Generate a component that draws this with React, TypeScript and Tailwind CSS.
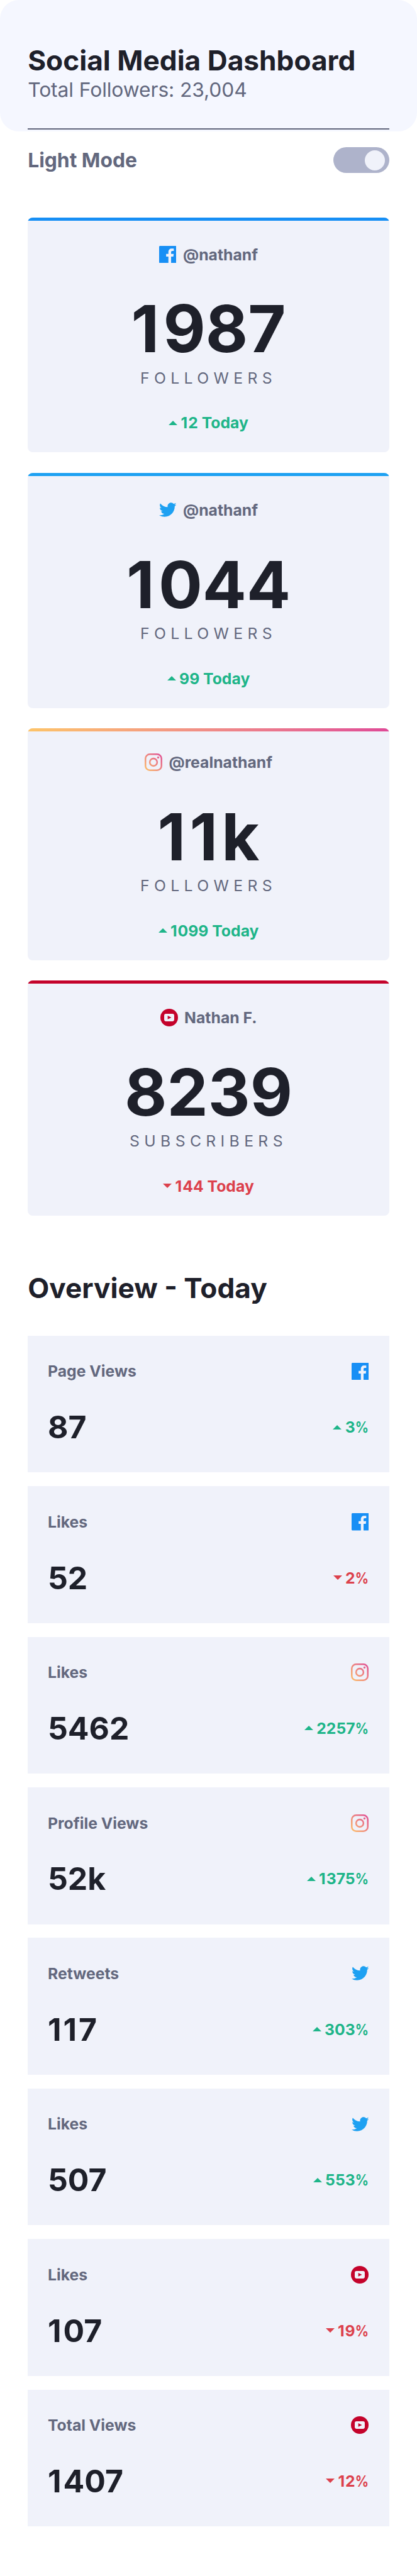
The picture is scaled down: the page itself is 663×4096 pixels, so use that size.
import { useId } from "react";

type Network = "facebook" | "twitter" | "instagram" | "youtube";
type Trend = "up" | "down";

function FacebookIcon() {
  return (
    <svg className="w-[27.6px] shrink-0" viewBox="0 0 20 20">
      <path
        fill="#178FF5"
        d="M18.896 0H1.104C.494 0 0 .494 0 1.104v17.793C0 19.506.494 20 1.104 20h9.58v-7.745H8.076V9.237h2.606V7.01c0-2.583 1.578-3.99 3.883-3.99 1.104 0 2.052.082 2.329.119v2.7h-1.598c-1.254 0-1.496.597-1.496 1.47v1.928h2.989l-.39 3.018h-2.6V20h5.098c.608 0 1.102-.494 1.102-1.104V1.104C20 .494 19.506 0 18.896 0z"
      />
    </svg>
  );
}

function TwitterIcon() {
  return (
    <svg className="w-[27.6px] shrink-0" viewBox="0 0 20 17">
      <path
        fill="#1EA1F2"
        d="M20 2.172a8.192 8.192 0 01-2.357.646 4.11 4.11 0 001.805-2.27 8.22 8.22 0 01-2.606.996A4.096 4.096 0 0013.847.248c-2.65 0-4.596 2.472-3.998 5.037A11.648 11.648 0 011.392.998a4.109 4.109 0 001.27 5.478 4.086 4.086 0 01-1.858-.513c-.045 1.9 1.318 3.679 3.291 4.075a4.113 4.113 0 01-1.853.07 4.106 4.106 0 003.833 2.849A8.25 8.25 0 010 14.658a11.616 11.616 0 006.29 1.843c7.618 0 11.923-6.434 11.663-12.205A8.354 8.354 0 0020 2.172z"
      />
    </svg>
  );
}

function InstagramIcon() {
  const id = useId();
  return (
    <svg className="w-[28px] shrink-0" viewBox="0 0 20 20" fill="none">
      <defs>
        <linearGradient id={id} gradientUnits="userSpaceOnUse" x1="0" y1="20" x2="20" y2="0">
          <stop offset="0" stopColor="#FDC468" />
          <stop offset="1" stopColor="#DF4996" />
        </linearGradient>
      </defs>
      <rect x="0.9" y="0.9" width="18.2" height="18.2" rx="5" stroke={`url(#${id})`} strokeWidth="1.8" />
      <circle cx="10" cy="10" r="4.2" stroke={`url(#${id})`} strokeWidth="1.8" />
      <circle cx="15.34" cy="4.66" r="1.2" fill={`url(#${id})`} />
    </svg>
  );
}

function YoutubeIcon() {
  return (
    <svg className="w-[28px] shrink-0" viewBox="0 0 20 20">
      <circle cx="10" cy="10" r="10" fill="#C4032B" />
      <rect x="4.3" y="5.8" width="11.4" height="8.4" rx="2" fill="#F0F2FA" />
      <path d="M8.3 7.9v4.1l4.2-2.05z" fill="#C4032B" />
    </svg>
  );
}

const icons: Record<Network, () => React.JSX.Element> = {
  facebook: FacebookIcon,
  twitter: TwitterIcon,
  instagram: InstagramIcon,
  youtube: YoutubeIcon,
};

const borders: Record<Network, string> = {
  facebook: "h-[5.3px] bg-[#178FF5]",
  twitter: "h-[5.3px] bg-[#1EA1F2]",
  instagram: "h-0",
  youtube: "h-[5.3px] bg-[#C4032B]",
};

/* Opens up the space after each "1" and narrows the percent sign. */
function Figures({ text, large = false }: { text: string; large?: boolean }) {
  return (
    <>
      {text.split(/([1%])/).map((part, i) => {
        if (part === "1") {
          return (
            <span key={i} className={large ? "tracking-[0.06em]" : "tracking-[0.04em]"}>
              1
            </span>
          );
        }
        if (part === "%") {
          return (
            <span key={i} className="ml-[-0.15em] inline-block origin-right scale-x-[.85]">
              %
            </span>
          );
        }
        return part;
      })}
    </>
  );
}

function Change({ trend, text }: { trend: Trend; text: string }) {
  const up = trend === "up";
  return (
    <div
      className={`flex items-center gap-[5.3px] text-[24.75px] leading-[30px] font-bold ${up ? "text-[#1EB589]" : "text-[#DC414C]"}`}
    >
      <svg className="h-[7.1px] w-[14.1px]" viewBox="0 0 8 4" fill="currentColor">
        <path d={up ? "M0 4l4-4 4 4z" : "M0 0l4 4 4-4z"} />
      </svg>
      <span>
        <Figures text={text} />
      </span>
    </div>
  );
}

interface Account {
  network: Network;
  handle: string;
  count: string;
  unit: string;
  trend: Trend;
  today: string;
}

const accounts: Account[] = [
  { network: "facebook", handle: "@nathanf", count: "1987", unit: "FOLLOWERS", trend: "up", today: "12 Today" },
  { network: "twitter", handle: "@nathanf", count: "1044", unit: "FOLLOWERS", trend: "up", today: "99 Today" },
  { network: "instagram", handle: "@realnathanf", count: "11k", unit: "FOLLOWERS", trend: "up", today: "1099 Today" },
  { network: "youtube", handle: "Nathan F.", count: "8239", unit: "SUBSCRIBERS", trend: "down", today: "144 Today" },
];

function AccountCard({ account }: { account: Account }) {
  const Icon = icons[account.network];
  return (
    <article className="relative overflow-hidden rounded-[8px] bg-[#F0F2FA]">
      {account.network === "instagram" && (
        <div className="absolute inset-x-0 top-0 h-[5.3px] bg-linear-to-r from-[#FDC468] to-[#DF4996]" />
      )}
      <div className={borders[account.network]} />
      <div className="flex h-[368.6px] flex-col items-center pt-[38.8px]">
        <div className="flex h-[30px] items-center gap-[10.6px] text-[24.75px] leading-[30px] font-bold text-[#63687E]">
          <Icon />
          <span>{account.handle}</span>
        </div>
        <div className="mt-[51.6px] text-[103.7px] leading-[104px] font-bold text-[#1E202A]">
          <Figures text={account.count} large />
        </div>
        <div className="mt-[10.6px] mb-[41.6px] text-[24.75px] leading-[30px] tracking-[7.35px] text-[#63687E]">
          {account.unit}
        </div>
        <Change trend={account.trend} text={account.today} />
      </div>
    </article>
  );
}

interface Stat {
  label: string;
  network: Network;
  value: string;
  trend: Trend;
  change: string;
}

const stats: Stat[] = [
  { label: "Page Views", network: "facebook", value: "87", trend: "up", change: "3%" },
  { label: "Likes", network: "facebook", value: "52", trend: "down", change: "2%" },
  { label: "Likes", network: "instagram", value: "5462", trend: "up", change: "2257%" },
  { label: "Profile Views", network: "instagram", value: "52k", trend: "up", change: "1375%" },
  { label: "Retweets", network: "twitter", value: "117", trend: "up", change: "303%" },
  { label: "Likes", network: "twitter", value: "507", trend: "up", change: "553%" },
  { label: "Likes", network: "youtube", value: "107", trend: "down", change: "19%" },
  { label: "Total Views", network: "youtube", value: "1407", trend: "down", change: "12%" },
];

function StatCard({ stat }: { stat: Stat }) {
  const Icon = icons[stat.network];
  return (
    <article className="h-[217.5px] bg-[#F0F2FA] pt-[41.6px] pr-[32.7px] pl-[31.8px]">
      <div className="flex h-[30px] items-center justify-between">
        <h3 className="text-[24.75px] leading-[30px] font-bold text-[#63687E]">{stat.label}</h3>
        <Icon />
      </div>
      <div className="mt-[43.7px] flex items-center justify-between">
        <span className="text-[49.9px] leading-[60px] font-bold text-[#1E202A]">
          <Figures text={stat.value} large />
        </span>
        <Change trend={stat.trend} text={stat.change} />
      </div>
    </article>
  );
}

export default function App() {
  return (
    <div className="h-[4096px] w-full overflow-hidden bg-white font-['Inter',sans-serif]">
      <header className="h-[208.6px] rounded-[30px] bg-[#F5F7FF] px-[44.2px] pt-[69.9px]">
        <h1 className="text-[44.2px] leading-[53.8px] font-bold text-[#1E202A]">Social Media Dashboard</h1>
        <p className="text-[31.8px] leading-[38px] tracking-[-0.1px] text-[#63687E]">Total Followers: 23,004</p>
        <div className="mt-[42.3px] h-[2px] bg-[#63687E]" />
      </header>
      <main className="px-[44.2px]">
        <div className="mt-[25.7px] flex h-[41.2px] items-center justify-between">
          <span className="text-[31.8px] leading-[38px] font-bold text-[#63687E]">Light Mode</span>
          <button
            aria-label="Light Mode"
            className="flex h-[41.2px] w-[88.4px] items-center justify-end rounded-full bg-[#AEB3CB] pr-[7.1px]"
          >
            <span className="size-[31.8px] rounded-full bg-[#F0F2FA]" />
          </button>
        </div>
        <section className="mt-[70.1px] flex flex-col gap-[32.4px]">
          {accounts.map((account) => (
            <AccountCard key={account.network} account={account} />
          ))}
        </section>
        <h2 className="mt-[87.9px] text-[44.2px] leading-[54px] font-bold text-[#1E202A]">Overview - Today</h2>
        <section className="mt-[49px] flex flex-col gap-[21.9px]">
          {stats.map((stat, i) => (
            <StatCard key={i} stat={stat} />
          ))}
        </section>
      </main>
    </div>
  );
}
